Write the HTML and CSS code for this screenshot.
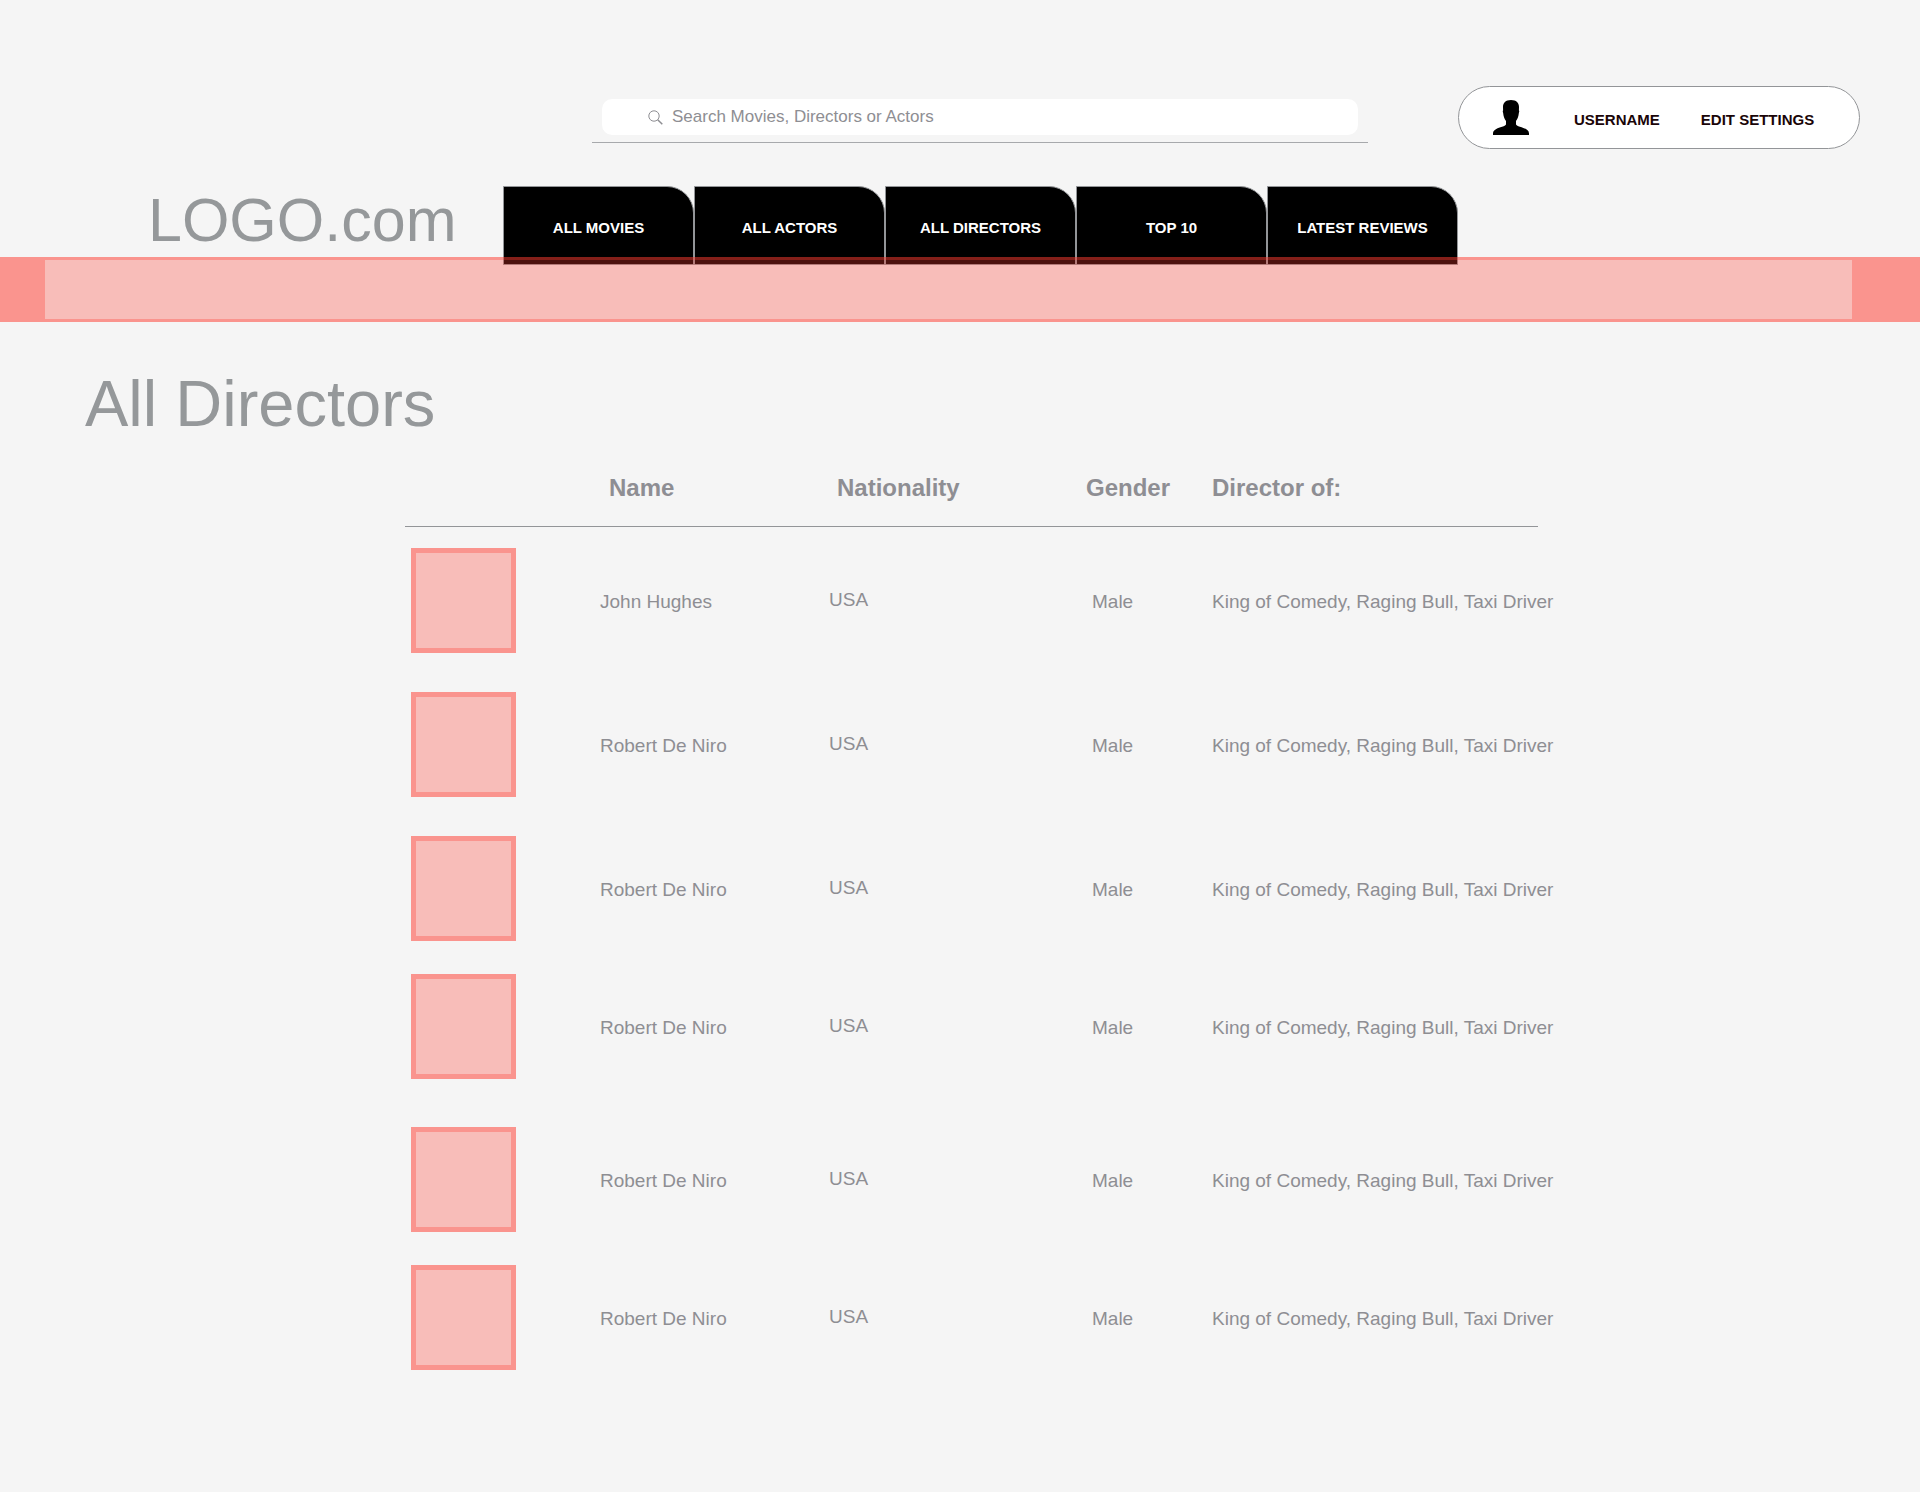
FILE: index.html
```html
<!DOCTYPE html>
<html lang="en">
<head>
  <meta charset="utf-8">
  <meta name="viewport" content="width=device-width, initial-scale=1">
  <title>All Directors</title>
  <link rel="stylesheet" href="styles.css">
</head>
<body>
  <header class="site-header">
    <div class="top-bar">
      <form class="search" role="search">
        <label class="search-box">
          <svg class="search-icon" viewBox="0 0 15 15" aria-hidden="true">
            <circle cx="6" cy="6" r="5.200"/>
            <path class="search-handle" d="M9.700 9.700l4.600 4.600"/>
          </svg>
          <input class="search-input" type="search" placeholder="Search Movies, Directors or Actors" aria-label="Search Movies, Directors or Actors">
        </label>
      </form>
      <div class="account">
        <svg class="avatar" viewBox="0 0 36 35" aria-hidden="true">
          <path d="M18 0c5.400 0 8 2.800 8 7 0 1.500-.1 2.600-.1 3.600.5.200.4 1.300 0 2.200-.4 4.200-1.500 6.200-2.900 8.200v3.400c1 1.600 3.300 2 5.600 2.800 4 1.400 7.400 3 7.400 6.300V35H0v-1.500c0-3.300 3.400-4.900 7.400-6.300 2.300-.8 4.600-1.200 5.600-2.800V21c-1.400-2-2.500-4-2.900-8.200-.4-.9-.5-2 0-2.200 0-1-.1-2.100-.1-3.600 0-4.200 2.600-7 8-7z"/>
        </svg>
        <a class="account-link" href="#username">USERNAME</a>
        <a class="account-link" href="#settings">EDIT SETTINGS</a>
      </div>
    </div>
    <div class="nav-bar">
      <a class="logo" href="#home">LOGO.com</a>
      <nav class="tabs">
        <a class="tab" href="#movies">ALL MOVIES</a>
        <a class="tab" href="#actors">ALL ACTORS</a>
        <a class="tab" href="#directors">ALL DIRECTORS</a>
        <a class="tab" href="#top">TOP 10</a>
        <a class="tab" href="#reviews">LATEST REVIEWS</a>
      </nav>
    </div>
    <div class="band"></div>
  </header>

  <main>
    <h1 class="page-title">All Directors</h1>
    <div class="listing">
      <table class="directors">
        <colgroup>
          <col class="col-photo">
          <col class="col-name">
          <col class="col-nationality">
          <col class="col-gender">
          <col>
        </colgroup>
        <thead>
          <tr>
            <th></th>
            <th class="head-name" scope="col">Name</th>
            <th class="head-nationality" scope="col">Nationality</th>
            <th scope="col">Gender</th>
            <th scope="col">Director of:</th>
          </tr>
        </thead>
        <tbody>
          <tr>
            <td class="photo-cell"><div class="photo"></div></td>
            <td>John Hughes</td>
            <td class="nationality">USA</td>
            <td class="gender">Male</td>
            <td>King of Comedy, Raging Bull, Taxi Driver</td>
          </tr>
          <tr>
            <td class="photo-cell"><div class="photo"></div></td>
            <td>Robert De Niro</td>
            <td class="nationality">USA</td>
            <td class="gender">Male</td>
            <td>King of Comedy, Raging Bull, Taxi Driver</td>
          </tr>
          <tr class="row-tight">
            <td class="photo-cell"><div class="photo"></div></td>
            <td>Robert De Niro</td>
            <td class="nationality">USA</td>
            <td class="gender">Male</td>
            <td>King of Comedy, Raging Bull, Taxi Driver</td>
          </tr>
          <tr class="row-loose">
            <td class="photo-cell"><div class="photo"></div></td>
            <td>Robert De Niro</td>
            <td class="nationality">USA</td>
            <td class="gender">Male</td>
            <td>King of Comedy, Raging Bull, Taxi Driver</td>
          </tr>
          <tr class="row-tight">
            <td class="photo-cell"><div class="photo"></div></td>
            <td>Robert De Niro</td>
            <td class="nationality">USA</td>
            <td class="gender">Male</td>
            <td>King of Comedy, Raging Bull, Taxi Driver</td>
          </tr>
          <tr>
            <td class="photo-cell"><div class="photo"></div></td>
            <td>Robert De Niro</td>
            <td class="nationality">USA</td>
            <td class="gender">Male</td>
            <td>King of Comedy, Raging Bull, Taxi Driver</td>
          </tr>
        </tbody>
      </table>
    </div>
  </main>
</body>
</html>
```

FILE: styles.css
```css
* {
  box-sizing: border-box;
}

body {
  margin: 0;
  background: #f5f5f5;
  color: #8e8e93;
  font-family: "Liberation Sans", Arial, Helvetica, sans-serif;
}

a {
  color: inherit;
  text-decoration: none;
}

/* Search and account */
.top-bar {
  display: grid;
  grid-template-columns: 592fr 776fr 90fr 402px 60px;
  align-items: start;
  padding-top: 86px;
}

.search {
  grid-column: 2;
  margin-top: 13px;
  padding: 0 10px 7px;
  border-bottom: 1px solid #a7a9ac;
}

.search-box {
  display: flex;
  align-items: center;
  gap: 9px;
  height: 36px;
  padding: 0 46px;
  border-radius: 10px;
  background: #fff;
}

.search-icon {
  flex: none;
  width: 15px;
  height: 15px;
  fill: none;
  stroke: #8e8e93;
  stroke-width: 1;
}

.search-handle {
  stroke-width: 1.5;
}

.search-input {
  flex: 1;
  min-width: 0;
  padding: 0;
  border: 0;
  outline: 0;
  background: transparent;
  color: #8e8e93;
  font: 17px/20px "Liberation Sans", Arial, Helvetica, sans-serif;
}

.search-input::placeholder {
  color: #8e8e93;
  opacity: 1;
}

.account {
  grid-column: 4;
  display: flex;
  align-items: center;
  height: 63px;
  padding-left: 34px;
  border: 1px solid #939598;
  border-radius: 32px;
  background: #fff;
}

.avatar {
  width: 36px;
  height: 35px;
  margin-right: 4px;
}

.account-link {
  margin-left: 41px;
  padding-top: 3px;
  color: #1a0508;
  font-size: 15px;
  font-weight: bold;
}

/* Logo and tabs */
.nav-bar {
  display: grid;
  grid-template-columns: 503fr 955px 462fr;
  margin-top: 37px;
}

.logo {
  padding-left: 148px;
  color: #95989a;
  font-size: 61px;
  line-height: 68px;
}

.tabs {
  display: flex;
}

.tab {
  display: flex;
  flex: 1;
  align-items: center;
  justify-content: center;
  height: 79px;
  padding-top: 4px;
  border: 1px solid #939598;
  border-top-right-radius: 27px;
  background: #000;
  color: #fff;
  font-size: 15px;
  font-weight: bold;
}

/* Translucent band that overlaps the foot of the tabs */
.band {
  position: relative;
  height: 65px;
  margin-top: -8px;
  border: solid rgba(255, 59, 48, 0.52);
  border-width: 3px 68px 3px 45px;
  background: rgba(255, 59, 48, 0.3);
  background-clip: padding-box;
}

/* Directors list */
.page-title {
  margin: 46px 0 34px 85px;
  color: #95989a;
  font-size: 65px;
  font-weight: normal;
  line-height: 72px;
}

.listing {
  display: grid;
  grid-template-columns: 405fr 1133fr 382fr;
  padding-bottom: 104px;
}

.directors {
  grid-column: 2;
  width: 100%;
  min-width: 960px;
  border-spacing: 0;
  table-layout: fixed;
  font-size: 19px;
  line-height: 22px;
  white-space: nowrap;
}

.col-photo {
  width: 195px;
}

.col-name {
  width: 229px;
}

.col-nationality {
  width: 257px;
}

.col-gender {
  width: 126px;
}

.directors th {
  padding: 0 0 24px;
  border-bottom: 1px solid #939598;
  font-size: 24px;
  line-height: 28px;
  text-align: left;
}

.directors .head-name {
  padding-left: 9px;
}

.directors .head-nationality {
  padding-left: 8px;
}

.directors tr {
  --row-gap: 18px;
}

.directors .row-tight {
  --row-gap: 12px;
}

.directors .row-loose {
  --row-gap: 27px;
}

.directors td {
  padding: 23px 0 var(--row-gap);
}

.directors .photo-cell {
  padding-top: 21px;
}

.directors .nationality {
  padding-top: 20px;
  padding-bottom: calc(var(--row-gap) + 1px);
}

.directors .gender {
  padding-left: 6px;
}

.photo {
  width: 105px;
  height: 105px;
  margin-left: 6px;
  border: 5px solid rgba(255, 59, 48, 0.52);
  background: rgba(255, 59, 48, 0.3);
  background-clip: padding-box;
}
```
